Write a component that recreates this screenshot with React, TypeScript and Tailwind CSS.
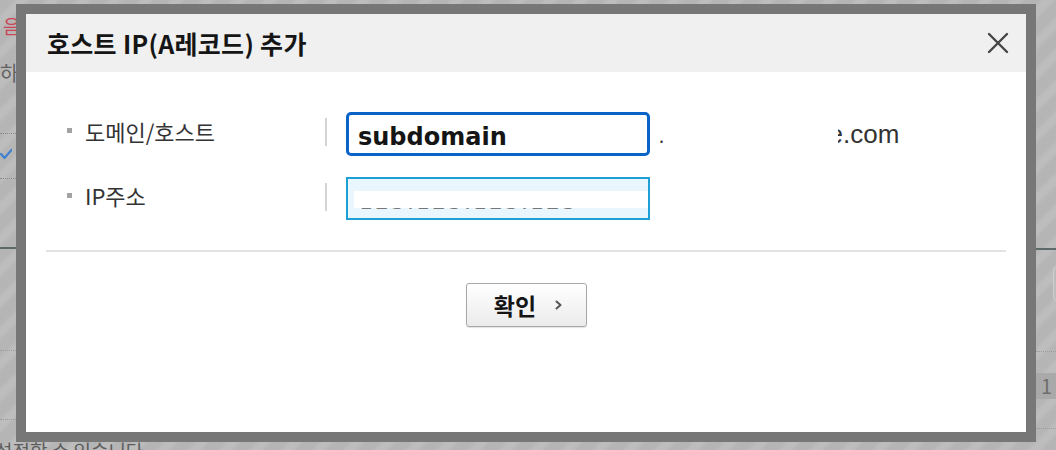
import React from "react";

const KR = "font-['Noto_Sans_CJK_KR','Noto_Sans',sans-serif]";

function CheckIcon() {
  return (
    <svg width="12" height="12" viewBox="0 0 12 12" className="block">
      <polyline points="1,6 4.5,10 11.5,2" fill="none" stroke="#3d7fd0" strokeWidth="2.2" strokeLinecap="round" strokeLinejoin="round" />
    </svg>
  );
}

function CloseIcon() {
  return (
    <svg width="22" height="22" viewBox="0 0 22 22" className="block">
      <path d="M2 2 L20 20 M20 2 L2 20" stroke="#454545" strokeWidth="2.4" strokeLinecap="round" />
    </svg>
  );
}

function Chevron() {
  return (
    <svg width="7" height="10" viewBox="0 0 7 10" className="block">
      <polyline points="1.5,1.5 5.5,5 1.5,8.5" fill="none" stroke="#555" strokeWidth="2" strokeLinecap="round" strokeLinejoin="round" />
    </svg>
  );
}

function Row({
  label,
  children,
  tail,
}: {
  label: string;
  children: React.ReactNode;
  tail?: React.ReactNode;
}) {
  return (
    <div className="flex items-center pl-[41px]">
      <div className="flex w-[258px] items-center mb-[7px]">
        <span className="block h-[5px] w-[5px] bg-[#a3a3a3]" />
        <span className={`ml-[13px] text-[22px] leading-[28px] text-[#333333] ${KR}`}>{label}</span>
      </div>
      <span className="block h-[28px] w-[2px] bg-[#d4d4d4] mb-[4px]" />
      <div className="ml-[19px]">{children}</div>
      {tail}
    </div>
  );
}

export default function App() {
  return (
    <div
      className={`relative h-[450px] w-[1056px] overflow-hidden bg-[repeating-linear-gradient(135deg,#b5b5b5_0px,#b5b5b5_9px,#bdbdbd_13px,#bdbdbd_18px,#b5b5b5_22px)] ${KR}`}
    >
      {/* page behind the overlay */}
      <div className="flex h-[440px] justify-between">
        <div className="flex w-[16px] flex-col overflow-hidden">
          <div className="mt-[16px] flex h-[20px] items-center">
            <span className="block h-[16px] w-px bg-[#9a9a9a]" />
            <span className="ml-[3px] whitespace-nowrap text-[19px] leading-[20px] text-[#cc4455]">음</span>
          </div>
          <div className="mt-[27px] h-[20px] whitespace-nowrap text-[20px] leading-[20px] text-[#626262]">하시</div>
          <div className="mt-[50px] h-px border-t border-dotted border-[#8a8a8a]" />
          <div className="mt-[14px] h-[12px]">
            <CheckIcon />
          </div>
          <div className="mt-[18px] h-px border-t border-dotted border-[#8a8a8a]" />
          <div className="mt-[68px] h-[2px] bg-[#5c6a6a]" />
          <div className="mt-[101px] h-px border-t border-dotted border-[#9c9c9c]" />
          <div className="mt-[68px] h-px border-t border-dotted border-[#9c9c9c]" />
        </div>
        <div className="flex w-[20px] flex-col overflow-hidden">
          <div className="mt-[248px] h-[2px] bg-[#5c6a6a]" />
          <div className="ml-[17px] mt-[16px] h-[35px] w-[10px] rounded-l-[4px] border border-[#cfcfcf] bg-[#bcbcbc]" />
          <div className="mt-[50px] h-px border-t border-dotted border-[#9c9c9c]" />
          <div className="mt-[21px] flex h-[26px] items-center justify-end bg-[#a9a9a9] pr-[4px] text-[20px] leading-[26px] text-[#6e6e6e]">
            1
          </div>
          <div className="mt-[29px] h-px border-t border-dotted border-[#9c9c9c]" />
        </div>
      </div>
      <div className="-ml-[5px] whitespace-nowrap text-[19px] leading-[22px] text-[#5d5d5d]">설정할 수 있습니다.</div>

      {/* modal */}
      <div className="absolute left-[16px] top-[4px] h-[438px] w-[1020px] border-[10px] border-[#777777] bg-white">
        <div className="flex h-[58px] items-center justify-between bg-[#f0f0f0] pl-[21px] pr-[17px]">
          <h1 className="text-[25px] font-bold leading-[30px] tracking-[0.3px] text-[#151515]">호스트 IP(A레코드) 추가</h1>
          <CloseIcon />
        </div>

        <div className="pt-[40px]">
          <Row
            label="도메인/호스트"
            tail={
              <div className="flex items-center">
                <span className="ml-[9px] text-[18px] leading-[20px] text-[#333] mt-[1px]">.</span>
                <span className="ml-[174px] flex items-center font-['Liberation_Sans',sans-serif] text-[26px] leading-[30px] text-[#333333]">
                  <span className="flex w-[5px] justify-end overflow-hidden">
                    <span>e</span>
                  </span>
                  <span>.com</span>
                </span>
              </div>
            }
          >
            <div className="flex h-[44px] w-[304px] items-center rounded-[5px] border-[3px] border-[#0a64c8] pl-[9px]">
              <span className="mt-[5px] font-['DejaVu_Sans',sans-serif] text-[24px] font-bold leading-[28px] text-[#151515]">subdomain</span>
            </div>
          </Row>

          <div className="mt-[21px]">
            <Row label="IP주소">
              <div className="relative flex h-[43px] w-[304px] items-center overflow-hidden border-2 border-[#1ea0d6] bg-[#e9f6fd] pl-[11px]">
                <span className="mt-[7px] font-['DejaVu_Sans',sans-serif] text-[22px] leading-[28px] tracking-[2px] text-[#777777]">
                  123.123.123.123
                </span>
                <span className="absolute left-[6px] right-0 top-[12px] h-[17px] bg-white" />
              </div>
            </Row>
          </div>

          <div className="mx-[20px] mt-[30px] h-[2px] bg-[#e3e3e3]" />

          <div className="mt-[31px] flex justify-center">
            <button className="flex h-[44px] w-[121px] items-center justify-center gap-[19px] rounded-[3px] border border-[#a8a8a8] bg-linear-to-b from-white to-[#ebebeb] pl-[4px] shadow-[0_1px_1px_rgba(0,0,0,0.12)]">
              <span className="text-[23px] font-bold leading-[28px] text-[#151515]">확인</span>
              <Chevron />
            </button>
          </div>
        </div>
      </div>
    </div>
  );
}
